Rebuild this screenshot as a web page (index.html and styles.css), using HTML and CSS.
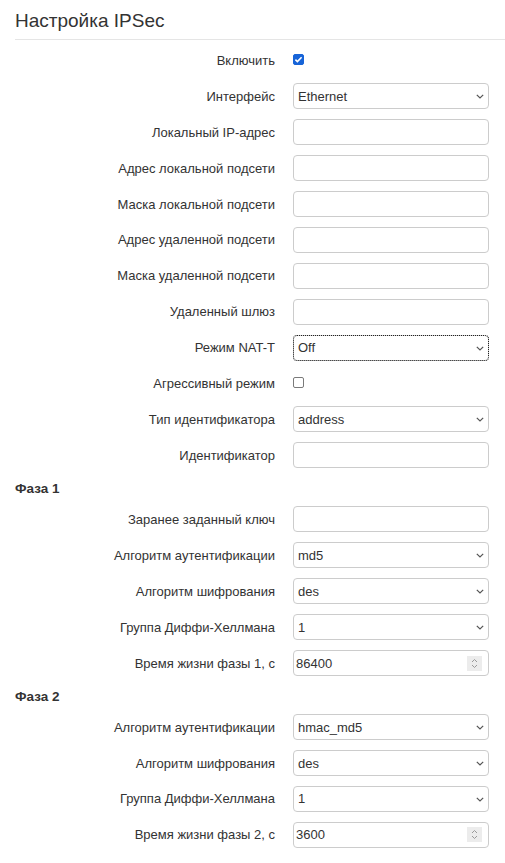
FILE: index.html
```html
<!DOCTYPE html>
<html lang="ru">
<head>
<meta charset="utf-8">
<title>Настройка IPSec</title>
<link rel="stylesheet" href="styles.css">
</head>
<body>
<div class="page">
  <h2 class="title">Настройка IPSec</h2>
  <div class="rule"></div>
  <form class="form">
    <div class="row"><label class="lbl">Включить</label><div class="ctl"><input type="checkbox" class="chk" checked></div></div>
    <div class="row"><label class="lbl">Интерфейс</label><div class="ctl sel"><select class="field"><option>Ethernet</option></select><svg class="arrow" width="8" height="5" viewBox="0 0 8 5"><path d="M0.8 0.8 L4 4 L7.2 0.8" fill="none" stroke="#555" stroke-width="1.2"/></svg></div></div>
    <div class="row"><label class="lbl">Локальный IP-адрес</label><div class="ctl"><input type="text" class="field"></div></div>
    <div class="row"><label class="lbl">Адрес локальной подсети</label><div class="ctl"><input type="text" class="field"></div></div>
    <div class="row"><label class="lbl">Маска локальной подсети</label><div class="ctl"><input type="text" class="field"></div></div>
    <div class="row"><label class="lbl">Адрес удаленной подсети</label><div class="ctl"><input type="text" class="field"></div></div>
    <div class="row"><label class="lbl">Маска удаленной подсети</label><div class="ctl"><input type="text" class="field"></div></div>
    <div class="row"><label class="lbl">Удаленный шлюз</label><div class="ctl"><input type="text" class="field"></div></div>
    <div class="row"><label class="lbl">Режим NAT-T</label><div class="ctl sel"><select class="field focused"><option>Off</option></select><svg class="arrow" width="8" height="5" viewBox="0 0 8 5"><path d="M0.8 0.8 L4 4 L7.2 0.8" fill="none" stroke="#555" stroke-width="1.2"/></svg></div></div>
    <div class="row"><label class="lbl">Агрессивный режим</label><div class="ctl"><input type="checkbox" class="chk"></div></div>
    <div class="row"><label class="lbl">Тип идентификатора</label><div class="ctl sel"><select class="field"><option>address</option></select><svg class="arrow" width="8" height="5" viewBox="0 0 8 5"><path d="M0.8 0.8 L4 4 L7.2 0.8" fill="none" stroke="#555" stroke-width="1.2"/></svg></div></div>
    <div class="row"><label class="lbl">Идентификатор</label><div class="ctl"><input type="text" class="field"></div></div>

    <div class="section">Фаза 1</div>
    <div class="row"><label class="lbl">Заранее заданный ключ</label><div class="ctl"><input type="text" class="field"></div></div>
    <div class="row"><label class="lbl">Алгоритм аутентификации</label><div class="ctl sel"><select class="field"><option>md5</option></select><svg class="arrow" width="8" height="5" viewBox="0 0 8 5"><path d="M0.8 0.8 L4 4 L7.2 0.8" fill="none" stroke="#555" stroke-width="1.2"/></svg></div></div>
    <div class="row"><label class="lbl">Алгоритм шифрования</label><div class="ctl sel"><select class="field"><option>des</option></select><svg class="arrow" width="8" height="5" viewBox="0 0 8 5"><path d="M0.8 0.8 L4 4 L7.2 0.8" fill="none" stroke="#555" stroke-width="1.2"/></svg></div></div>
    <div class="row"><label class="lbl">Группа Диффи-Хеллмана</label><div class="ctl sel"><select class="field"><option>1</option></select><svg class="arrow" width="8" height="5" viewBox="0 0 8 5"><path d="M0.8 0.8 L4 4 L7.2 0.8" fill="none" stroke="#555" stroke-width="1.2"/></svg></div></div>
    <div class="row"><label class="lbl">Время жизни фазы 1, с</label><div class="ctl num"><input type="text" class="field" value="86400"><svg class="spin" width="15" height="15" viewBox="0 0 15 15"><path d="M5 6 L7.5 3.5 L10 6 M5 9 L7.5 11.5 L10 9" fill="none" stroke="#9a9a9a" stroke-width="1"/></svg></div></div>

    <div class="section">Фаза 2</div>
    <div class="row"><label class="lbl">Алгоритм аутентификации</label><div class="ctl sel"><select class="field"><option>hmac_md5</option></select><svg class="arrow" width="8" height="5" viewBox="0 0 8 5"><path d="M0.8 0.8 L4 4 L7.2 0.8" fill="none" stroke="#555" stroke-width="1.2"/></svg></div></div>
    <div class="row"><label class="lbl">Алгоритм шифрования</label><div class="ctl sel"><select class="field"><option>des</option></select><svg class="arrow" width="8" height="5" viewBox="0 0 8 5"><path d="M0.8 0.8 L4 4 L7.2 0.8" fill="none" stroke="#555" stroke-width="1.2"/></svg></div></div>
    <div class="row"><label class="lbl">Группа Диффи-Хеллмана</label><div class="ctl sel"><select class="field"><option>1</option></select><svg class="arrow" width="8" height="5" viewBox="0 0 8 5"><path d="M0.8 0.8 L4 4 L7.2 0.8" fill="none" stroke="#555" stroke-width="1.2"/></svg></div></div>
    <div class="row"><label class="lbl">Время жизни фазы 2, с</label><div class="ctl num"><input type="text" class="field" value="3600"><svg class="spin" width="15" height="15" viewBox="0 0 15 15"><path d="M5 6 L7.5 3.5 L10 6 M5 9 L7.5 11.5 L10 9" fill="none" stroke="#9a9a9a" stroke-width="1"/></svg></div></div>
  </form>
</div>
</body>
</html>
```

FILE: styles.css
```css
html, body {
  margin: 0;
  padding: 0;
  background: #fff;
}

body {
  font-family: "Liberation Sans", Arial, sans-serif;
  font-size: 13px;
  color: #333;
}

.page {
  padding-left: 15px;
}

.title {
  margin: 0;
  padding-top: 10px;
  font-size: 19px;
  line-height: 21px;
  font-weight: normal;
  color: #333;
}

.rule {
  margin-top: 8px;
  border-top: 1px solid #e5e5e5;
}

.form {
  display: flex;
  flex-direction: column;
  gap: 9.9px;
  margin: 7.5px 0 0 0;
}

.row {
  display: grid;
  grid-template-columns: 260px 196px;
  column-gap: 18px;
  height: 26px;
  align-items: center;
}

.lbl {
  text-align: right;
  color: #333;
  white-space: nowrap;
}

.ctl {
  position: relative;
  height: 26px;
  display: flex;
  align-items: center;
}

.field {
  box-sizing: border-box;
  width: 196px;
  height: 26px;
  margin: 0;
  border: 1px solid #ccc;
  border-radius: 4px;
  padding: 0 2px;
  font-family: "Liberation Sans", Arial, sans-serif;
  font-size: 13px;
  color: #333;
  background: #fff;
  outline: none;
}

select.field {
  appearance: none;
  -webkit-appearance: none;
  padding-left: 4px;
}

.focused {
  outline: 1px dotted #222;
  outline-offset: -1px;
}

.arrow {
  position: absolute;
  right: 5px;
  top: 11px;
  pointer-events: none;
}

.spin {
  position: absolute;
  right: 7px;
  top: 5.5px;
  background: #ececec;
  pointer-events: none;
}

.chk {
  appearance: none;
  -webkit-appearance: none;
  box-sizing: border-box;
  width: 11px;
  height: 11px;
  margin: 0 0 2px 0;
  border: 1px solid #7a7a7a;
  border-radius: 2px;
  background: #fff;
}

.chk:checked {
  border-color: #1764d8;
  background: #1764d8 url("data:image/svg+xml,%3Csvg xmlns='http://www.w3.org/2000/svg' width='11' height='11' viewBox='0 0 11 11'%3E%3Cpath d='M2.4 5.6 L4.4 7.6 L8.6 3.2' fill='none' stroke='%23fff' stroke-width='1.6'/%3E%3C/svg%3E") center / 11px 11px no-repeat;
}

.section {
  height: 18.4px;
  line-height: 18px;
  padding-top: 2px;
  box-sizing: border-box;
  font-size: 13.5px;
  font-weight: bold;
  color: #333;
}
```
